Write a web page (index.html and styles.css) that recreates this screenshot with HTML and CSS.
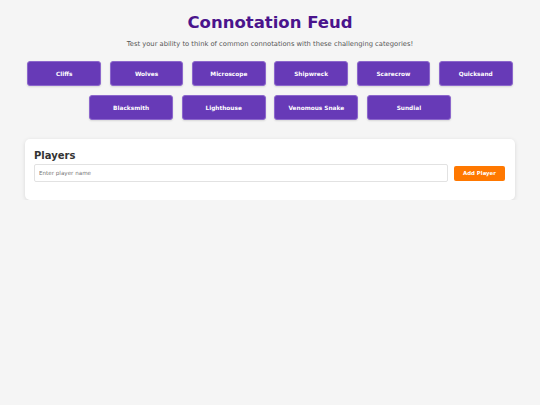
FILE: index.html
```html
<!DOCTYPE html>
<html lang="en">
<head>
<meta charset="utf-8">
<title>Connotation Feud</title>
<link rel="stylesheet" href="styles.css">
</head>
<body>
<div class="page">
  <header class="header">
    <h1 class="title">Connotation Feud</h1>
    <p class="subtitle">Test your ability to think of common connotations with these challenging categories!</p>
  </header>
  <div class="categories">
    <div class="cat-row">
      <button class="cat">Cliffs</button>
      <button class="cat">Wolves</button>
      <button class="cat">Microscope</button>
      <button class="cat">Shipwreck</button>
      <button class="cat">Scarecrow</button>
      <button class="cat">Quicksand</button>
    </div>
    <div class="cat-row">
      <button class="cat cat--wide">Blacksmith</button>
      <button class="cat cat--wide">Lighthouse</button>
      <button class="cat cat--wide">Venomous Snake</button>
      <button class="cat cat--wide">Sundial</button>
    </div>
  </div>
  <section class="card">
    <h2 class="card-title">Players</h2>
    <div class="player-form">
      <input class="player-input" type="text" placeholder="Enter player name">
      <button class="add-btn">Add Player</button>
    </div>
  </section>
</div>
</body>
</html>
```
FILE: styles.css
```css
* { box-sizing: border-box; }
html, body {
  margin: 0;
  padding: 0;
  background: #f5f5f5;
  font-family: "DejaVu Sans", Verdana, sans-serif;
}
.page {
  padding: 13px 25px 0 25px;
}
.header {
  text-align: center;
}
.title {
  margin: 0;
  font-size: 16.5px;
  line-height: 20px;
  font-weight: bold;
  color: #4a148c;
}
.subtitle {
  margin: 7px 0 0 0;
  font-size: 6.75px;
  line-height: 9px;
  color: #555;
}
.categories {
  margin-top: 12px;
  display: flex;
  flex-direction: column;
  gap: 9px;
}
.cat-row {
  display: flex;
  justify-content: center;
  gap: 8.6px;
}
.cat {
  width: 73.7px;
  height: 25px;
  padding: 0;
  background: #673ab7;
  color: #fff;
  border: 1px solid #8c67cc;
  border-radius: 3px;
  font-family: "DejaVu Sans", Verdana, sans-serif;
  font-size: 5.8px;
  font-weight: bold;
  box-shadow: 0 1px 2px rgba(0,0,0,0.12);
}
.cat--wide {
  width: 84px;
}
.card {
  margin-top: 19px;
  background: #fff;
  border-radius: 5px;
  box-shadow: 0 1px 4px rgba(0,0,0,0.12);
  padding: 11px 10px 18px 9px;
}
.card-title {
  margin: 0;
  font-size: 10px;
  line-height: 11.64px;
  font-weight: bold;
  color: #333;
}
.player-form {
  margin-top: 2.4px;
  display: flex;
  align-items: center;
  gap: 6px;
}
.player-input {
  flex: 1;
  height: 18px;
  border: 1px solid #e2e2e2;
  border-radius: 2px;
  padding: 0 4px;
  font-family: "DejaVu Sans", Verdana, sans-serif;
  font-size: 5.6px;
  color: #333;
  background: #fff;
}
.player-input::placeholder {
  color: #777;
}
.add-btn {
  width: 51px;
  height: 15px;
  padding: 0;
  border: none;
  border-radius: 2px;
  background: #ff7800;
  color: #fff;
  font-family: "DejaVu Sans", Verdana, sans-serif;
  font-size: 5.4px;
  font-weight: bold;
}
```
